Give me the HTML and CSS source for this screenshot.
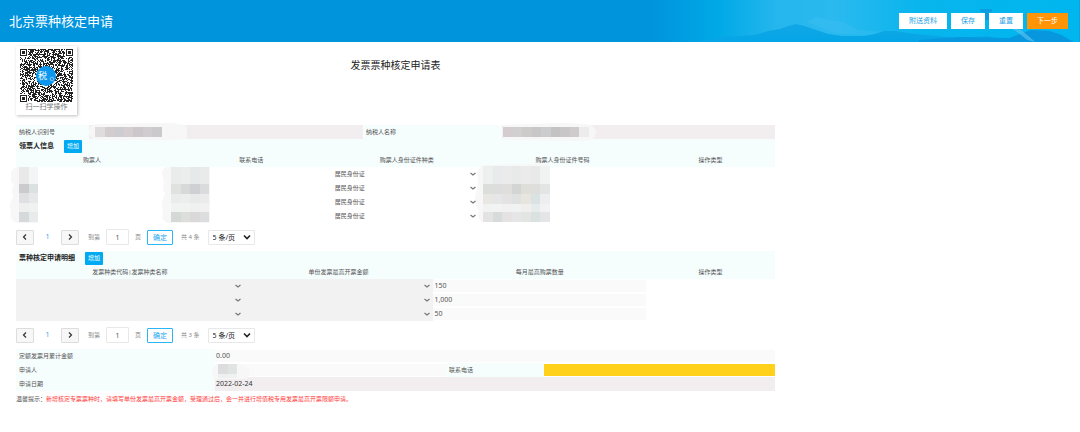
FILE: index.html
```
<!DOCTYPE html>
<html lang="zh-CN">
<head>
    <meta charset="UTF-8">
    <meta name="viewport" content="width=device-width, initial-scale=1.0">
    <title>北京票种核定申请</title>
    <link rel="stylesheet" href="styles.css">
</head>
<body>
    <header class="header">
        <svg class="header-bg" viewBox="0 0 720 42" preserveAspectRatio="none" aria-hidden="true">
            <defs>
                <linearGradient id="sky">
                    <stop offset="0" stop-color="#0094dd"/>
                    <stop offset=".41" stop-color="#0094dd"/>
                    <stop offset=".5" stop-color="#00a9e6"/>
                    <stop offset=".58" stop-color="#24b6ed"/>
                    <stop offset=".66" stop-color="#2bb9ef"/>
                    <stop offset=".78" stop-color="#08b5ed"/>
                    <stop offset="1" stop-color="#00b6ee"/>
                </linearGradient>
                <linearGradient id="hill" x1="0" y1="0" x2="0" y2="1">
                    <stop offset="0" stop-color="#12a6e6"/>
                    <stop offset="1" stop-color="#04a6e6"/>
                </linearGradient>
            </defs>
            <rect width="720" height="42" fill="url(#sky)"/>
            <path d="M448 22 L458 17 L470 20 L485 22 L500 30 L530 32 L540 36 L480 34 Z" fill="#4cc4f2" opacity=".25"/>
            <path d="M360 37 L396 35 L410 31 L422 29 L430 26 L438 24 L446 26 L458 30 L470 34 L484 36 L506 36 L516 34 L526 31 L536 31 L556 34 L600 38 L630 36 L645 42 L340 42 Z" fill="url(#hill)"/>
            <path d="M560 40 L600 37 L650 38 L672 30 L690 31 L702 35 L714 42 L560 42 Z" fill="#0697df"/>
            <path d="M640 24 L655 30 L668 40 L676 42 L662 30 Z" fill="#63c7f1" opacity=".6"/>
            <path d="M621 9 h12 v3 h-3 v8 h-6 v-8 h-3 Z" fill="#0b9de2"/>
        </svg>
        <h1 class="header-title">北京票种核定申请</h1>
        <div class="header-actions">
            <button type="button" class="btn">附送资料</button>
            <button type="button" class="btn">保存</button>
            <button type="button" class="btn">重置</button>
            <button type="button" class="btn btn-next">下一步</button>
        </div>
    </header>

    <main class="content">
        <div class="top">
            <figure class="qr">
                <svg id="qr" class="qr-code" viewBox="0 0 53 53" shape-rendering="crispEdges" role="img" aria-label="二维码"></svg>
                <figcaption>扫一扫学操作</figcaption>
            </figure>
            <h2 class="form-title">发票票种核定申请表</h2>
        </div>

        <section class="block">
            <div class="taxpayer">
                <span class="label">纳税人识别号</span>
                <span class="value readonly"><svg class="mask" data-mask="taxId"></svg></span>
                <span class="label">纳税人名称</span>
                <span class="value readonly"><svg class="mask" data-mask="taxName"></svg></span>
            </div>
            <div class="section-head">
                <h3>领票人信息</h3>
                <button type="button" class="btn-add">增加</button>
            </div>
            <table class="grid">
                <colgroup>
                    <col class="c-buyer"><col class="c-phone"><col class="c-idtype"><col class="c-idno"><col class="c-action">
                </colgroup>
                <thead>
                    <tr><th>购票人</th><th>联系电话</th><th>购票人身份证件种类</th><th>购票人身份证件号码</th><th>操作类型</th></tr>
                </thead>
                <tbody>
                    <tr>
                        <td><svg class="mask" data-mask="buyer"></svg></td>
                        <td><svg class="mask" data-mask="phone"></svg></td>
                        <td><select aria-label="证件种类"><option>居民身份证</option></select></td>
                        <td><svg class="mask" data-mask="idNo"></svg></td>
                        <td></td>
                    </tr>
                    <tr><td></td><td></td><td><select aria-label="证件种类"><option>居民身份证</option></select></td><td></td><td></td></tr>
                    <tr><td></td><td></td><td><select aria-label="证件种类"><option>居民身份证</option></select></td><td></td><td></td></tr>
                    <tr><td></td><td></td><td><select aria-label="证件种类"><option>居民身份证</option></select></td><td></td><td></td></tr>
                </tbody>
            </table>
            <nav class="pager">
                <button type="button" class="page-btn" aria-label="上一页"><svg viewBox="0 0 8 8"><path d="M5 1.5 L2.5 4 L5 6.5"/></svg></button>
                <a href="#" class="page-current">1</a>
                <button type="button" class="page-btn" aria-label="下一页"><svg viewBox="0 0 8 8"><path d="M3 1.5 L5.5 4 L3 6.5"/></svg></button>
                <label class="page-jump">到第 <input type="text" value="1"> 页</label>
                <button type="button" class="page-ok">确定</button>
                <span class="page-total">共 4 条</span>
                <select class="page-size" aria-label="每页条数"><option>5 条/页</option></select>
            </nav>
        </section>

        <section class="block">
            <div class="section-head">
                <h3>票种核定申请明细</h3>
                <button type="button" class="btn-add">增加</button>
            </div>
            <table class="grid">
                <colgroup>
                    <col class="c-kind"><col class="c-limit"><col class="c-count"><col class="c-action">
                </colgroup>
                <thead>
                    <tr><th>发票种类代码|发票种类名称</th><th>单份发票最高开票金额</th><th>每月最高购票数量</th><th>操作类型</th></tr>
                </thead>
                <tbody>
                    <tr>
                        <td class="locked"><select aria-label="发票种类"><option></option></select></td>
                        <td class="locked"><select aria-label="最高开票金额"><option></option></select></td>
                        <td><input type="text" value="150" aria-label="购票数量"></td>
                        <td></td>
                    </tr>
                    <tr>
                        <td class="locked"><select aria-label="发票种类"><option></option></select></td>
                        <td class="locked"><select aria-label="最高开票金额"><option></option></select></td>
                        <td><input type="text" value="1,000" aria-label="购票数量"></td>
                        <td></td>
                    </tr>
                    <tr>
                        <td class="locked"><select aria-label="发票种类"><option></option></select></td>
                        <td class="locked"><select aria-label="最高开票金额"><option></option></select></td>
                        <td><input type="text" value="50" aria-label="购票数量"></td>
                        <td></td>
                    </tr>
                </tbody>
            </table>
            <nav class="pager">
                <button type="button" class="page-btn" aria-label="上一页"><svg viewBox="0 0 8 8"><path d="M5 1.5 L2.5 4 L5 6.5"/></svg></button>
                <a href="#" class="page-current">1</a>
                <button type="button" class="page-btn" aria-label="下一页"><svg viewBox="0 0 8 8"><path d="M3 1.5 L5.5 4 L3 6.5"/></svg></button>
                <label class="page-jump">到第 <input type="text" value="1"> 页</label>
                <button type="button" class="page-ok">确定</button>
                <span class="page-total">共 3 条</span>
                <select class="page-size" aria-label="每页条数"><option>5 条/页</option></select>
            </nav>
        </section>

        <section class="block applicant">
            <label class="label" for="total">定额发票月累计金额</label>
            <input class="wide" type="text" id="total" value="0.00">
            <label class="label" for="applicant">申请人</label>
            <div class="masked-field">
                <input type="text" id="applicant">
                <svg class="mask" data-mask="applicant"></svg>
            </div>
            <label class="label" for="tel">联系电话</label>
            <input class="required" type="text" id="tel">
            <label class="label" for="date">申请日期</label>
            <input class="wide readonly" type="text" id="date" value="2022-02-24" readonly>
        </section>

        <p class="tip">温馨提示：<span>新增核定专票票种时，请填写单份发票最高开票金额，受理通过后，会一并进行增值税专用发票最高开票限额申请。</span></p>
    </main>

    <script src="script.js"></script>
</body>
</html>
```
FILE: styles.css
```
* {
    box-sizing: border-box;
}
body {
    margin: 0;
    background-color: #fff;
    color: #555;
    font-family: "Noto Sans", "Noto Sans CJK SC", sans-serif;
    font-size: 6px;
    line-height: 14px;
}
h1, h2, h3, p, figure {
    margin: 0;
}
button, input, select {
    margin: 0;
    border: none;
    border-radius: 0;
    font: inherit;
    color: inherit;
}
button {
    cursor: pointer;
}

/* header */
.header {
    position: relative;
    display: flex;
    align-items: center;
    justify-content: space-between;
    height: 42px;
    padding: 0 12px 0 9px;
    background-color: #0094dd;
}
.header-bg {
    position: absolute;
    top: 0;
    right: 0;
    width: 67%;
    height: 100%;
}
.header-title {
    position: relative;
    color: #fff;
    font-size: 13px;
    font-weight: normal;
}
.header-actions {
    position: relative;
    display: flex;
    gap: 4px;
}
.btn {
    height: 16px;
    padding: 0 10px;
    background-color: #fff;
    color: #1b9fe6;
    font-size: 7px;
    line-height: 16px;
}
.btn-next {
    background-color: #ff9406;
    color: #fff;
}

/* title row */
.content {
    margin: 0 305px 0 16px;
}
.top {
    display: grid;
    grid-template-columns: 1fr auto 1fr;
    padding: 4px 0 10px;
}
.qr {
    justify-self: start;
    padding: 3px 4px;
    background-color: #fff;
    box-shadow: 1px 1px 3px rgba(0, 0, 0, 0.25);
    color: #777;
    font-size: 7px;
    line-height: 10px;
    text-align: center;
}
.qr-code {
    display: block;
    width: 53px;
    height: 53px;
}
.form-title {
    padding-top: 12px;
    color: #222;
    font-size: 10px;
    font-weight: normal;
}

/* taxpayer and section heads */
.taxpayer {
    display: grid;
    grid-template-columns: 73fr 274fr 139fr 273fr;
    height: 14px;
    background-color: #f6fdfd;
}
.label {
    padding-left: 3px;
    background-color: #f6fdfd;
}
.value {
    position: relative;
}
.readonly {
    background-color: #f2eeef;
}
.section-head {
    display: flex;
    align-items: center;
    gap: 10px;
    height: 14px;
    padding-left: 3px;
    background-color: #f6fdfd;
}
.section-head h3 {
    color: #222;
    font-size: 7px;
}
.btn-add {
    height: 13px;
    padding: 0 3px;
    border-radius: 1px;
    background-color: #00aaf2;
    color: #fff;
    line-height: 13px;
}

/* tables */
.grid {
    width: 100%;
    border-collapse: collapse;
    table-layout: fixed;
}
.c-buyer { width: 20%; }
.c-phone { width: 22%; }
.c-idtype { width: 19%; }
.c-idno { width: 22%; }
.c-kind { width: 30%; }
.c-limit { width: 25%; }
.c-count { width: 28%; }
.c-action { width: 17%; }
.grid th, .grid td {
    position: relative;
    height: 14px;
    padding: 0;
}
.grid th {
    background-color: #f6fdfd;
    font-weight: normal;
    text-align: center;
}
.grid select {
    display: block;
    width: 100%;
    height: 14px;
    appearance: none;
    background: url("data:image/svg+xml,%3Csvg xmlns='http://www.w3.org/2000/svg' viewBox='0 0 8 8'%3E%3Cpath d='M1.5 3 L4 5 L6.5 3' fill='none' stroke='%23777' stroke-width='1.2'/%3E%3C/svg%3E") no-repeat right 2px center / 8px 8px;
}
.grid .locked {
    background-color: #f2f2f2;
}
.grid input {
    display: block;
    width: 100%;
    height: 12px;
    padding: 0 1px;
    background-color: #fafafa;
    font-size: 7px;
}

/* blurred-out personal data */
.mask {
    position: absolute;
    overflow: visible;
    top: 0;
    left: 0;
    width: 1px;
    height: 1px;
    pointer-events: none;
}

/* pager */
.pager {
    display: flex;
    align-items: center;
    height: 28px;
    color: #888;
}
.page-btn {
    display: flex;
    align-items: center;
    justify-content: center;
    width: 18px;
    height: 15px;
    padding: 0;
    border: 1px solid #ddd;
    border-radius: 1px;
    background-color: #f7f7f7;
}
.page-btn svg {
    width: 8px;
    height: 8px;
    fill: none;
    stroke: #333;
    stroke-width: 1.2;
}
.page-current {
    width: 27px;
    color: #3aa5ee;
    font-size: 7px;
    text-align: center;
    text-decoration: none;
}
.page-jump {
    display: flex;
    align-items: center;
    gap: 6px;
    padding: 0 6px 0 9px;
}
.page-jump input {
    width: 23px;
    height: 16px;
    padding: 0;
    border: 1px solid #e8e8e8;
    border-radius: 1px;
    color: #555;
    font-size: 7px;
    text-align: center;
}
.page-ok {
    width: 26px;
    height: 15px;
    padding: 0;
    border: 1px solid #2cb5f5;
    border-radius: 1px;
    background-color: #fff;
    color: #1ea5ee;
    font-size: 7px;
    line-height: 13px;
}
.page-total {
    padding: 0 8px;
}
.page-size {
    width: 47px;
    height: 15px;
    padding: 0 4px;
    appearance: none;
    border: 1px solid #e8e8e8;
    border-radius: 1px;
    background: url("data:image/svg+xml,%3Csvg xmlns='http://www.w3.org/2000/svg' viewBox='0 0 8 8'%3E%3Cpath d='M1 2.5 L4 5.5 L7 2.5' fill='none' stroke='%23222' stroke-width='1.6'/%3E%3C/svg%3E") no-repeat right 3px center / 8px 8px;
    color: #222;
    font-size: 7px;
}

/* applicant */
.applicant {
    display: grid;
    grid-template-columns: 199fr 231fr 98fr 231fr;
    grid-auto-rows: 14px;
    align-items: center;
}
.applicant input {
    width: 100%;
    height: 12px;
    padding: 0 1px;
    background-color: #fafafa;
    font-size: 7px;
}
.applicant .wide {
    grid-column: span 3;
}
.applicant .readonly {
    height: 14px;
    background-color: #f2eeef;
    color: #333;
}
.applicant .required {
    background-color: #ffd11a;
}
.masked-field {
    position: relative;
    display: flex;
    align-items: center;
}
.tip {
    color: #555;
    line-height: 16px;
}
.tip span {
    color: #ff3b3b;
}
```
FILE: script.js
```
const SVG_NS = 'http://www.w3.org/2000/svg';

function add(parent, tag, attrs) {
    const el = document.createElementNS(SVG_NS, tag);
    for (const key in attrs) {
        el.setAttribute(key, attrs[key]);
    }
    parent.appendChild(el);
    return el;
}

// Mosaics over personal data: brush outline, then rows of [y, height, colours]
const masks = {
    taxId: {
        x: 6, cell: 9.5,
        brush: 'M0 7 Q0 -1 10 -1 L80 -2 Q98 -1 98 3 L98 13 Q94 16 60 15 L10 15 Q0 14 0 7 Z',
        rows: [[2, 10, ['#dfdcde', '#d3cdd0', '#cdccd0', '#d5cdcf', '#cbc7ca', '#d0cccf', '#cbc9cb']]]
    },
    taxName: {
        x: 1, cell: 9.5,
        brush: 'M1 0 L60 -2 L84 -1 Q94 1 94 7 Q94 16 80 16 L10 15 L1 14 Z',
        rows: [[2, 10, ['#d3cdcf', '#d1cfd0', '#cfcaca', '#c9c6c8', '#cbccce', '#c5c2c4', '#c9c6c8', '#cfcacc', '#ececed']]]
    },
    buyer: {
        x: 3, cell: 9.5,
        brush: 'M-5 8 Q-5 0 4 0 L22 0 L22 56 L2 56 Q-7 54 -5 45 Q-8 38 -3 30 Q-5 20 -2 18 Q-6 14 -5 8 Z',
        rows: [[0, 17, ['#e9e9ea', '#f4f5f6']], [17, 9, ['#cbcbcd', '#dbe0e0']], [26, 10, ['#dfe0e1', '#e6e8e9']], [36, 9, ['#eef0ef', '#f0f2f1']], [45, 10, ['#d5d9d9', '#e8ebeb']]]
    },
    phone: {
        x: 3, cell: 9.5,
        brush: 'M-6 6 Q-6 0 0 0 L42 0 L42 56 L0 56 Q-8 53 -5 45 Q-8 35 -3 27 Q-6 20 -4 16 Z',
        rows: [[0, 17, ['#e9eceb', '#eceeed', '#e6e9e9', '#e9eaea']], [17, 10, ['#dfe2de', '#d7d9d9', '#cfd0d4', '#dadbdd']], [27, 9, ['#e8eceb', '#eceeed', '#e8eaea', '#ebebec']], [36, 9, ['#f1f3f2', '#f1f2f2', '#eff1f1', '#f1f1f1']], [45, 10, ['#d4d8d7', '#dcdedb', '#dad8d9', '#dcdddf']]]
    },
    idNo: {
        x: 4, cell: 9.5,
        brush: 'M-2 8 Q-1 -1 6 -2 L50 -3 L70 -4 L70 55 L4 55 Q-3 53 0 44 Q-7 36 -2 22 Q0 16 -2 8 Z',
        rows: [[-1, 18, ['#eeefef', '#e8ebeb', '#ebebec', '#e8eaea', '#ebebeb', '#e8e9e9', '#f1f2f2']], [17, 10, ['#dcdedc', '#dcdddc', '#e0dedd', '#d3d5d5', '#dfdfd9', '#dedfdd', '#e3e5e4']], [27, 10, ['#e8e7e4', '#e5e6e8', '#e4e2e3', '#dfe1e0', '#e8e5df', '#dae2e4', '#eceef0']], [37, 8, ['#f2f2f2', '#f2f3f3', '#f1f1f1', '#f1f2f2', '#f1eeee', '#e6ecec', '#f2f2f4']], [45, 10, ['#e3e3e3', '#d7dbdb', '#e4e2e3', '#e6e6e8', '#e3e5e2', '#dae1e1', '#e4e5e7']]]
    },
    applicant: {
        x: 3, cell: 9.5,
        brush: 'M-3 10 Q-2 0 6 0 L20 0 Q34 0 35 9 L32 15 L0 15 Z',
        rows: [[0, 10, ['#dddcde', '#e0e5e4']], [10, 4, ['#eef0ef', '#f0f2f1']]]
    }
};

document.querySelectorAll('[data-mask]').forEach(svg => {
    const mask = masks[svg.dataset.mask];
    add(svg, 'path', { d: mask.brush, fill: '#f7f7f7' });
    mask.rows.forEach(([y, height, colours]) => {
        colours.forEach((fill, i) => {
            add(svg, 'rect', { x: mask.x + i * mask.cell, y, width: mask.cell, height, fill, 'shape-rendering': 'crispEdges' });
        });
    });
});

// QR code
const size = 53;
const qr = document.getElementById('qr');
let seed = 20220224;

function random() {
    seed = (seed * 1103515245 + 12345) % 2147483648;
    return seed / 2147483648;
}

let modules = '';
for (let y = 0; y < size; y++) {
    for (let x = 0; x < size; x++) {
        const inFinder = (x < 8 && y < 8) || (x > size - 9 && y < 8) || (x < 8 && y > size - 9);
        if (random() < 0.55 && !inFinder) {
            modules += `M${x} ${y}h1v1h-1z`;
        }
    }
}
add(qr, 'path', { d: modules, fill: '#222' });
[[0, 0], [size - 7, 0], [0, size - 7]].forEach(([x, y]) => {
    add(qr, 'rect', { x: x + 0.5, y: y + 0.5, width: 6, height: 6, fill: 'none', stroke: '#222' });
    add(qr, 'rect', { x: x + 2, y: y + 2, width: 3, height: 3, fill: '#222' });
});
add(qr, 'circle', { cx: 26, cy: 27, r: 10, fill: '#0c97ee', 'shape-rendering': 'auto' });
const logo = add(qr, 'text', { x: 18, y: 30, fill: '#fff', 'font-size': 9 });
logo.textContent = '税';
add(qr, 'circle', { cx: 32, cy: 30, r: 1.8, fill: 'none', stroke: '#9ad5fa', 'stroke-width': 0.8, 'shape-rendering': 'auto' });
```
